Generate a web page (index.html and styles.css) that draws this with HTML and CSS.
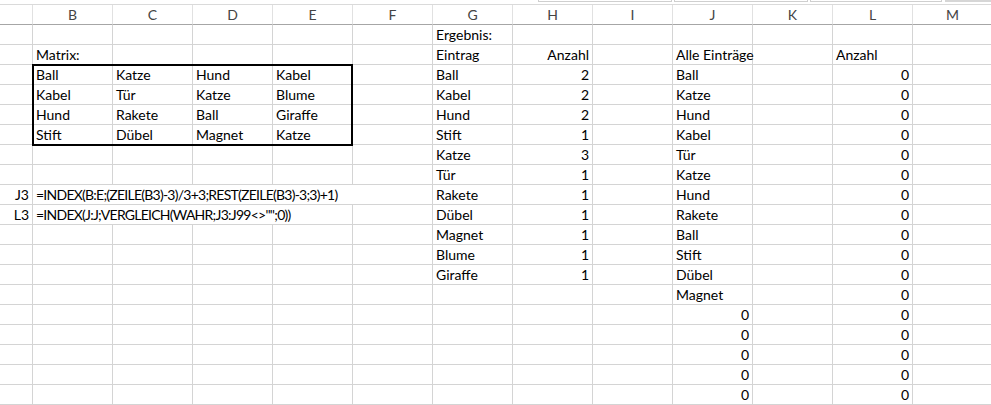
FILE: index.html
```html
<!DOCTYPE html>
<html lang="de">
<head>
<meta charset="utf-8">
<title>Matrix</title>
<link rel="stylesheet" href="styles.css">
</head>
<body>
<div class="topbar">
  <span class="tb tb1"></span>
  <span class="tb tb2"></span>
  <span class="tb tb3"></span>
  <span class="tb tb4"></span>
</div>
<div class="sheet">
  <div class="hd"></div><div class="hd">B</div><div class="hd">C</div><div class="hd">D</div><div class="hd">E</div><div class="hd">F</div><div class="hd">G</div><div class="hd">H</div><div class="hd">I</div><div class="hd">J</div><div class="hd">K</div><div class="hd">L</div><div class="hd">M</div>

  <div class="c"></div><div class="c"></div><div class="c"></div><div class="c"></div><div class="c"></div><div class="c"></div><div class="c">Ergebnis:</div><div class="c"></div><div class="c"></div><div class="c"></div><div class="c"></div><div class="c"></div><div class="c"></div>

  <div class="c"></div><div class="c">Matrix:</div><div class="c"></div><div class="c"></div><div class="c"></div><div class="c"></div><div class="c">Eintrag</div><div class="c r">Anzahl</div><div class="c"></div><div class="c">Alle Einträge</div><div class="c"></div><div class="c">Anzahl</div><div class="c"></div>

  <div class="c"></div><div class="c">Ball</div><div class="c">Katze</div><div class="c">Hund</div><div class="c">Kabel</div><div class="c"></div><div class="c">Ball</div><div class="c r">2</div><div class="c"></div><div class="c">Ball</div><div class="c"></div><div class="c r">0</div><div class="c"></div>

  <div class="c"></div><div class="c">Kabel</div><div class="c">Tür</div><div class="c">Katze</div><div class="c">Blume</div><div class="c"></div><div class="c">Kabel</div><div class="c r">2</div><div class="c"></div><div class="c">Katze</div><div class="c"></div><div class="c r">0</div><div class="c"></div>

  <div class="c"></div><div class="c">Hund</div><div class="c">Rakete</div><div class="c">Ball</div><div class="c">Giraffe</div><div class="c"></div><div class="c">Hund</div><div class="c r">2</div><div class="c"></div><div class="c">Hund</div><div class="c"></div><div class="c r">0</div><div class="c"></div>

  <div class="c"></div><div class="c">Stift</div><div class="c">Dübel</div><div class="c">Magnet</div><div class="c">Katze</div><div class="c"></div><div class="c">Stift</div><div class="c r">1</div><div class="c"></div><div class="c">Kabel</div><div class="c"></div><div class="c r">0</div><div class="c"></div>

  <div class="c"></div><div class="c"></div><div class="c"></div><div class="c"></div><div class="c"></div><div class="c"></div><div class="c">Katze</div><div class="c r">3</div><div class="c"></div><div class="c">Tür</div><div class="c"></div><div class="c r">0</div><div class="c"></div>

  <div class="c"></div><div class="c"></div><div class="c"></div><div class="c"></div><div class="c"></div><div class="c"></div><div class="c">Tür</div><div class="c r">1</div><div class="c"></div><div class="c">Katze</div><div class="c"></div><div class="c r">0</div><div class="c"></div>

  <div class="c r">J3</div><div class="c span5 formula">=INDEX(B:E;(ZEILE(B3)-3)/3+3;REST(ZEILE(B3)-3;3)+1)</div><div class="c">Rakete</div><div class="c r">1</div><div class="c"></div><div class="c">Hund</div><div class="c"></div><div class="c r">0</div><div class="c"></div>

  <div class="c r">L3</div><div class="c span4 formula">=INDEX(J:J;VERGLEICH(WAHR;J3:J99&lt;&gt;"";0))</div><div class="c"></div><div class="c">Dübel</div><div class="c r">1</div><div class="c"></div><div class="c">Rakete</div><div class="c"></div><div class="c r">0</div><div class="c"></div>

  <div class="c"></div><div class="c"></div><div class="c"></div><div class="c"></div><div class="c"></div><div class="c"></div><div class="c">Magnet</div><div class="c r">1</div><div class="c"></div><div class="c">Ball</div><div class="c"></div><div class="c r">0</div><div class="c"></div>

  <div class="c"></div><div class="c"></div><div class="c"></div><div class="c"></div><div class="c"></div><div class="c"></div><div class="c">Blume</div><div class="c r">1</div><div class="c"></div><div class="c">Stift</div><div class="c"></div><div class="c r">0</div><div class="c"></div>

  <div class="c"></div><div class="c"></div><div class="c"></div><div class="c"></div><div class="c"></div><div class="c"></div><div class="c">Giraffe</div><div class="c r">1</div><div class="c"></div><div class="c">Dübel</div><div class="c"></div><div class="c r">0</div><div class="c"></div>

  <div class="c"></div><div class="c"></div><div class="c"></div><div class="c"></div><div class="c"></div><div class="c"></div><div class="c"></div><div class="c"></div><div class="c"></div><div class="c">Magnet</div><div class="c"></div><div class="c r">0</div><div class="c"></div>

  <div class="c"></div><div class="c"></div><div class="c"></div><div class="c"></div><div class="c"></div><div class="c"></div><div class="c"></div><div class="c"></div><div class="c"></div><div class="c r">0</div><div class="c"></div><div class="c r">0</div><div class="c"></div>

  <div class="c"></div><div class="c"></div><div class="c"></div><div class="c"></div><div class="c"></div><div class="c"></div><div class="c"></div><div class="c"></div><div class="c"></div><div class="c r">0</div><div class="c"></div><div class="c r">0</div><div class="c"></div>

  <div class="c"></div><div class="c"></div><div class="c"></div><div class="c"></div><div class="c"></div><div class="c"></div><div class="c"></div><div class="c"></div><div class="c"></div><div class="c r">0</div><div class="c"></div><div class="c r">0</div><div class="c"></div>

  <div class="c"></div><div class="c"></div><div class="c"></div><div class="c"></div><div class="c"></div><div class="c"></div><div class="c"></div><div class="c"></div><div class="c"></div><div class="c r">0</div><div class="c"></div><div class="c r">0</div><div class="c"></div>

  <div class="c"></div><div class="c"></div><div class="c"></div><div class="c"></div><div class="c"></div><div class="c"></div><div class="c"></div><div class="c"></div><div class="c"></div><div class="c r">0</div><div class="c"></div><div class="c r">0</div><div class="c"></div>

  <div class="frame"></div>
</div>
</body>
</html>
```

FILE: styles.css
```css
* { box-sizing: border-box; }

html, body {
  margin: 0;
  padding: 0;
  background: #fff;
  overflow: hidden;
  width: 991px;
  height: 405px;
}

body {
  font-family: "Lato", "Liberation Sans", sans-serif;
  font-size: 14px;
  color: #000;
}

.topbar {
  height: 4px;
  display: flex;
  align-items: flex-start;
  padding-left: 538px;
  gap: 2px;
}

.tb {
  display: block;
  height: 2px;
  border: 1px solid #cfcfcf;
  border-top: none;
}

.tb1 { width: 134px; }
.tb2 { width: 134px; }
.tb3 { width: 132px; }
.tb4 {
  flex: 1;
  margin-left: 1px;
  background: #d6d6d6;
  border: none;
}

.sheet {
  position: relative;
  display: grid;
  grid-template-columns: 33px repeat(11, 80px) 80px;
  grid-auto-rows: 20px;
  border-top: 1px solid #dadada;
  width: 993px;
}

.hd {
  border-right: 1px solid #e1e1e1;
  border-bottom: 1px solid #a6a6a6;
  color: #444;
  text-align: center;
  line-height: 19px;
  font-size: 14px;
}

.c {
  border-right: 1px solid #d4d4d4;
  border-bottom: 1px solid #d4d4d4;
  padding: 0 3px 0 3px;
  line-height: 19px;
  white-space: nowrap;
  overflow: visible;
}

.r { text-align: right; }

.span5 { grid-column: span 5; }
.span4 { grid-column: span 4; }

.formula { letter-spacing: -0.75px; }

.frame {
  position: absolute;
  grid-column: 2 / 6;
  grid-row: 4 / 8;
  top: -1px;
  left: -1px;
  right: 0;
  bottom: -1px;
  border: 2px solid #000;
}
```
